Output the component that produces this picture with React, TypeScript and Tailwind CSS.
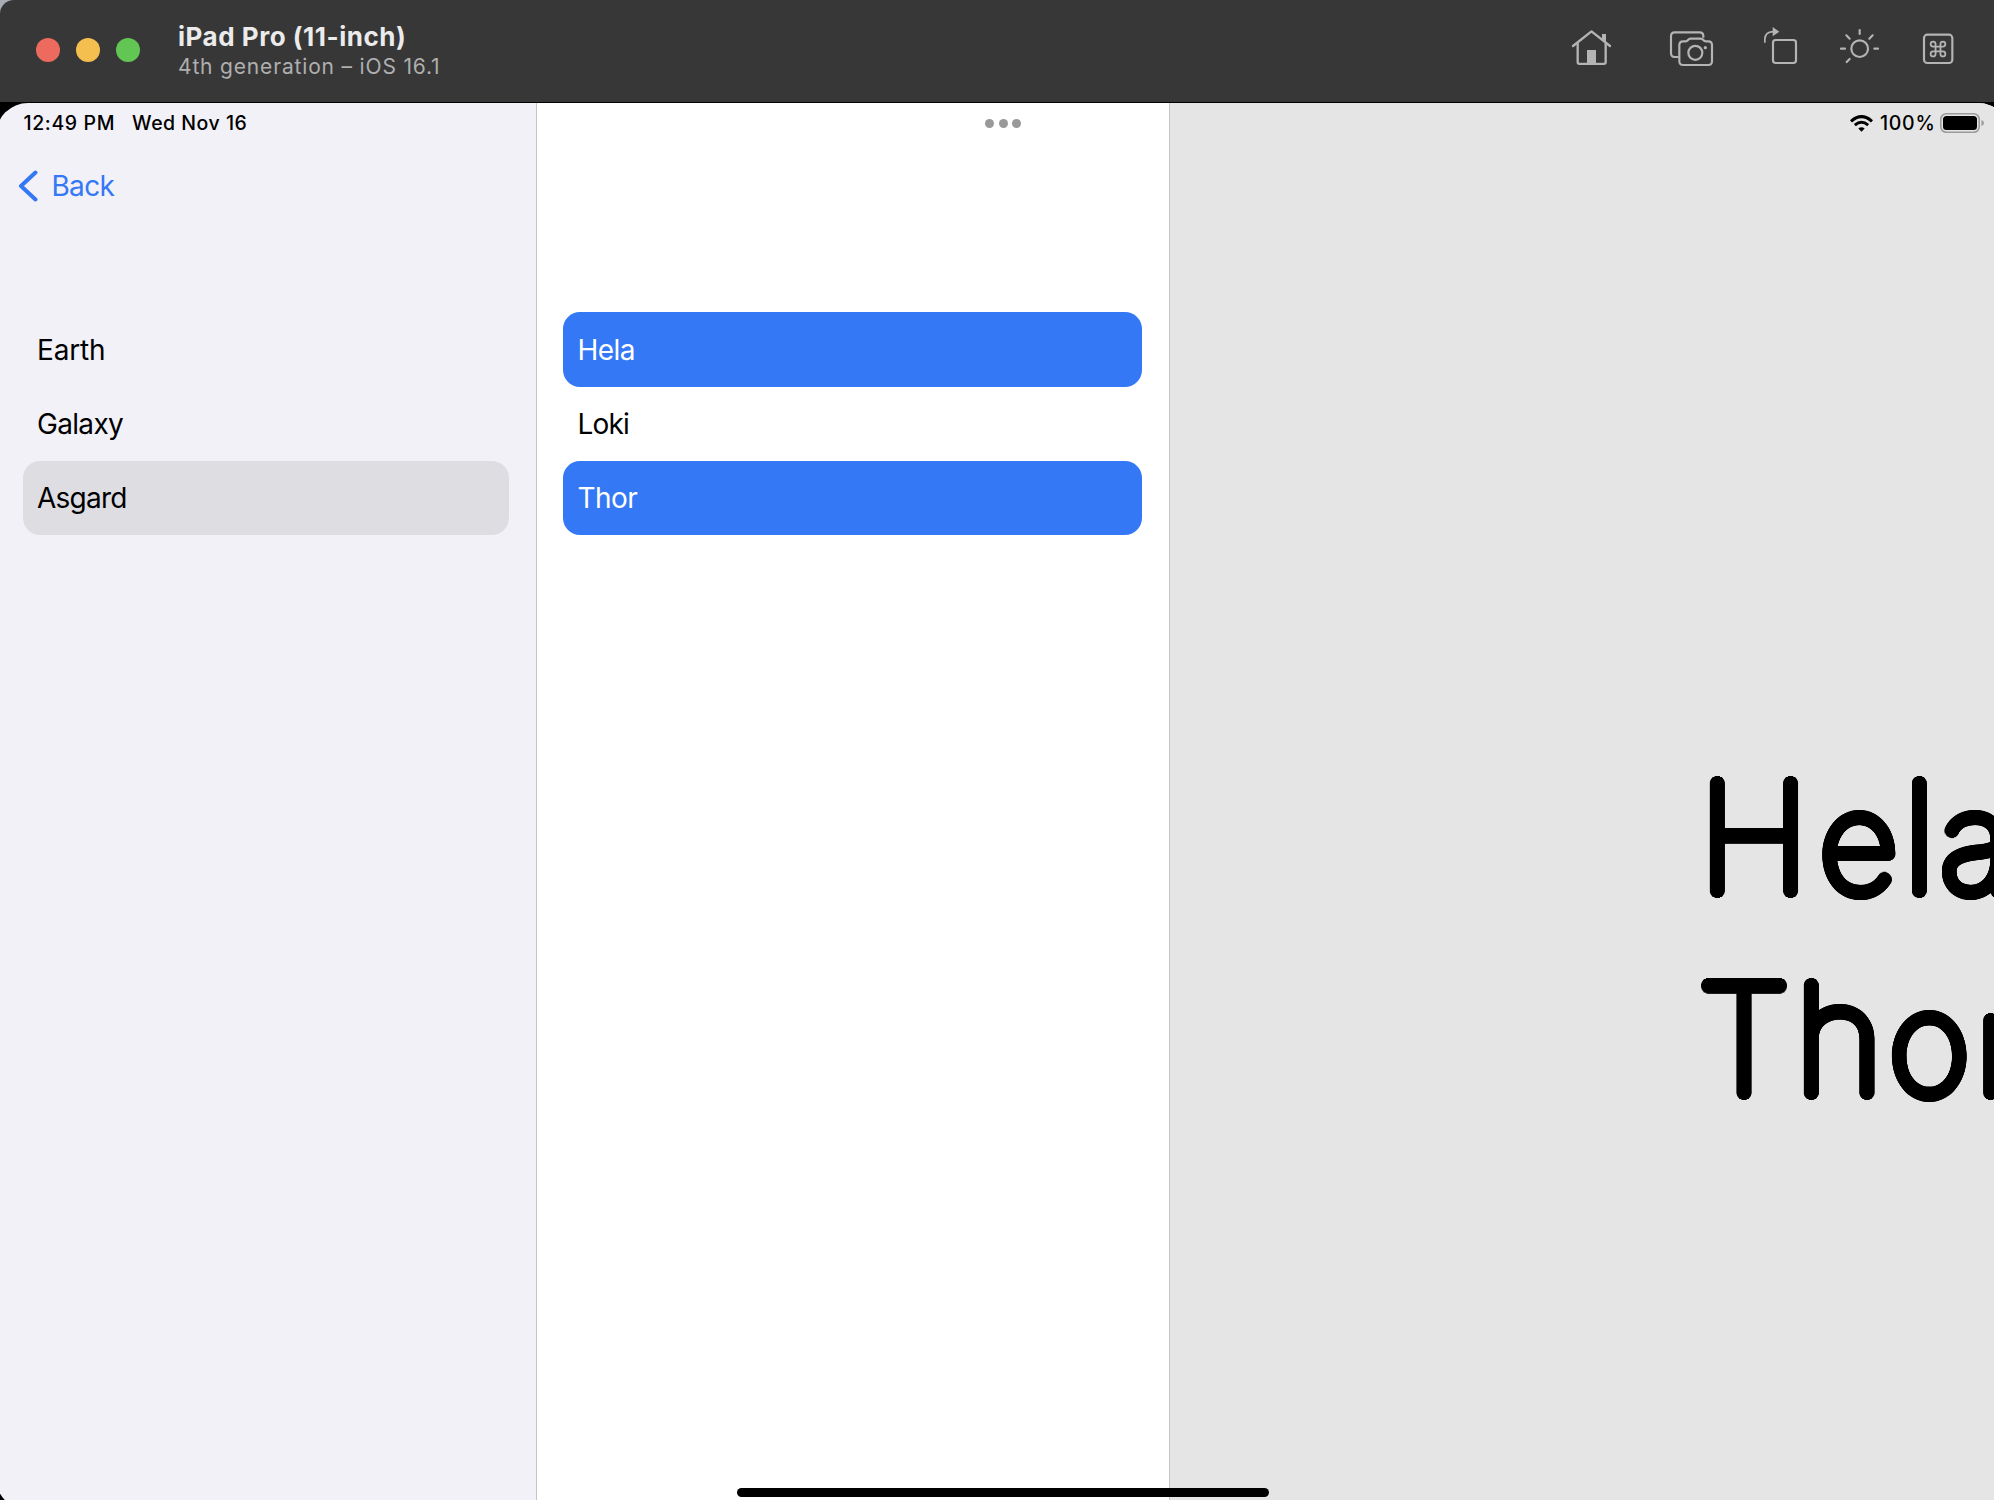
import React from "react";

const shadowRings = (radii: number[], steps: number) =>
  radii
    .flatMap((r) =>
      Array.from({ length: steps }, (_, i) => {
        const a = (i / steps) * Math.PI * 2;
        return `${(Math.cos(a) * r).toFixed(2)}px ${(Math.sin(a) * r).toFixed(2)}px 0 #000`;
      }),
    )
    .join(", ");

/* Thickens the thin face with round terminals. */
const roundedTerminals = { textShadow: shadowRings([2.5, 4.5, 5.7], 32) };

function HomeIcon() {
  return (
    <svg className="h-10 w-[41px] overflow-visible" viewBox="93 84 123 120" fill="none" stroke="currentColor" strokeWidth="7" strokeLinecap="round" strokeLinejoin="round">
      <path d="M99 138 L154.500 94 L210 138" />
      <path d="M113 131 V186 q0 5.500 5.500 5.500 H191.500 q5.500 0 5.500 -5.500 V131" />
      <path d="M141 150 h27 v42 h-27z M186 102 h12 v28 l-12 -10z" fill="currentColor" stroke="none" />
    </svg>
  );
}

function ScreenshotIcon() {
  return (
    <svg className="h-10 w-[45px] overflow-visible" viewBox="387 84 135 120" fill="none" stroke="currentColor" strokeWidth="6.500" strokeLinecap="round" strokeLinejoin="round">
      <path d="M416 171 H404 q-11 0 -11 -11 V108 q0 -11 11 -11 H479 q11 0 11 11 v5" strokeLinecap="butt" />
      <path d="M429 124 H437 Q441 124 444 120 Q447 116 452 116 H482 Q487 116 490 120 Q493 124 498 124 H505 Q516 124 516 135 V184 Q516 195 505 195 H429 Q418 195 418 184 V135 Q418 124 429 124Z" />
      <circle cx="466" cy="158.500" r="21" />
      <circle cx="496" cy="143" r="5" fill="currentColor" stroke="none" />
    </svg>
  );
}

function RotateIcon() {
  return (
    <svg className="h-10 w-[35px] overflow-visible" viewBox="669 84 105 120" fill="none" stroke="currentColor" strokeWidth="6.500">
      <rect x="699" y="120" width="69" height="69" rx="8" />
      <path d="M674.500 128 V118 Q675 96 699 95" strokeWidth="5" />
      <path d="M698 81 L718 95 L698 109Z" fill="currentColor" stroke="none" />
    </svg>
  );
}

function AppearanceIcon() {
  return (
    <svg className="h-10 w-[41px] overflow-visible" viewBox="897 84 123 120" fill="none" stroke="currentColor" strokeWidth="6.500" strokeLinecap="round">
      <circle cx="959" cy="146" r="25" />
      <path d="M959 90 V102 M903 146 H915 M1003 146 H1014 M919 106 L929 116 M998 106 L988 116 M920 186 L929 177" />
    </svg>
  );
}

function ShortcutIcon() {
  return (
    <svg className="h-10 w-8 overflow-visible" viewBox="1146 84 96 120" fill="none" stroke="currentColor" strokeWidth="6.500">
      <rect x="1152" y="104" width="85" height="85" rx="10" />
      <path transform="translate(1164.600 117.600) scale(2.450)" strokeWidth="2.200" d="M15 6v12a3 3 0 1 0 3-3H6a3 3 0 1 0 3 3V6a3 3 0 1 0-3 3h12a3 3 0 1 0-3-3" />
    </svg>
  );
}

function WifiIcon() {
  return (
    <svg className="h-[17px] w-[23px]" viewBox="0 0 69 51" fill="none" stroke="#000" strokeWidth="9">
      <path d="M3 19 Q34.500 -9 66 19" />
      <path d="M14.500 30.500 Q34.500 13 54.500 30.500" />
      <path d="M25 40.500 Q34.500 33 44 40.500 L34.500 50Z" fill="#000" stroke="none" />
    </svg>
  );
}

function BatteryIcon() {
  return (
    <svg className="h-5 w-[44px]" viewBox="0 0 44 20">
      <rect x="0.800" y="0.800" width="38.400" height="18.400" rx="5.500" fill="none" stroke="#9b9b9b" strokeWidth="1.600" />
      <rect x="3" y="3" width="34" height="14" rx="3.500" fill="#000" />
      <path d="M41.500 6.800 Q44 8 44 10 Q44 12 41.500 13.200Z" fill="#9b9b9b" />
    </svg>
  );
}

const worlds = [
  { name: "Earth", style: "tracking-[-0.200px]" },
  { name: "Galaxy", style: "tracking-[-0.680px]" },
  { name: "Asgard", style: "tracking-[-0.770px] bg-[#dedde2]" },
];

const people = [
  { name: "Hela", style: "tracking-[-0.540px] bg-[#3478f6] text-white" },
  { name: "Loki", style: "tracking-[-0.830px]" },
  { name: "Thor", style: "tracking-[-0.570px] bg-[#3478f6] text-white" },
];

function TitleBar() {
  return (
    <div className="shrink-0 bg-[#a9acb5]">
      <header className="flex h-[102px] items-center rounded-tl-[14px] bg-[#373737] pr-10 pb-0.5 pl-9">
        <div className="flex gap-4">
          <span className="size-6 rounded-full bg-[#ed6a5f]" />
          <span className="size-6 rounded-full bg-[#f5bf4f]" />
          <span className="size-6 rounded-full bg-[#62c655]" />
        </div>
        <div className="mt-[3px] ml-[38px] leading-[30px] whitespace-nowrap">
          <h1 className="text-[26px] font-bold tracking-[0.520px] text-[#ebebeb]">iPad Pro (11-inch)</h1>
          <p className="text-[21px] tracking-[0.830px] text-[#afafaf]">4th generation – iOS 16.1</p>
        </div>
        <nav className="mt-[-4px] ml-auto flex text-[#b4b4b4]">
          <HomeIcon />
          <span className="ml-[57px]"><ScreenshotIcon /></span>
          <span className="ml-[49px]"><RotateIcon /></span>
          <span className="ml-[41px]"><AppearanceIcon /></span>
          <span className="ml-[42px]"><ShortcutIcon /></span>
        </nav>
      </header>
    </div>
  );
}

export default function App() {
  return (
    <div className="flex h-[1500px] w-[1994px] flex-col overflow-hidden bg-black font-[Inter,sans-serif] text-black">
      <TitleBar />
      <main className="relative -mr-4 ml-[-4px] mt-px flex h-[1407px] shrink-0 overflow-hidden rounded-[32px] bg-[#f2f1f7]">
        <aside className="flex w-[540px] shrink-0 flex-col pl-1">
          <div className="mt-[10px] flex h-5 items-center gap-[17px] pl-[23.500px] text-[19.500px] leading-5 font-medium whitespace-nowrap">
            <span className="tracking-[0.620px]">12:49 PM</span>
            <span className="tracking-[0.500px]">Wed Nov 16</span>
          </div>
          <a className="mt-[33px] flex h-10 items-center pl-[18px] text-[28px] text-[#3478f6]">
            <svg className="h-8 w-5" viewBox="0 0 20 32" fill="none" stroke="currentColor" strokeWidth="4" strokeLinecap="round" strokeLinejoin="round">
              <path d="M17.500 2.500 L3 16 L17.500 29.500" />
            </svg>
            <span className="ml-[13.500px] tracking-[-0.700px]">Back</span>
          </a>
          <ul className="mt-[106.400px] ml-[23px] w-[485.500px] text-[28px]">
            {worlds.map((w) => (
              <li key={w.name} className={`flex h-[74.300px] items-center rounded-[17px] pl-[14px] ${w.style}`}>{w.name}</li>
            ))}
          </ul>
        </aside>
        <section className="w-[634px] shrink-0 border-x border-[#c6c6c8] bg-white">
          <div className="mt-4 ml-[448px] flex h-[9px] gap-[4.500px]">
            <span className="size-[9px] rounded-full bg-[#999]" />
            <span className="size-[9px] rounded-full bg-[#999]" />
            <span className="size-[9px] rounded-full bg-[#999]" />
          </div>
          <ul className="mt-[184.400px] ml-[26px] w-[579px] text-[28px]">
            {people.map((p) => (
              <li key={p.name} className={`flex h-[74.300px] items-center rounded-[17px] pl-[14.500px] ${p.style}`}>{p.name}</li>
            ))}
          </ul>
        </section>
        <section className="flex w-[840px] shrink-0 flex-col bg-[#e5e5e5]">
          <div className="mt-[10px] flex h-5 items-center justify-end pr-[26px] text-[19.500px] leading-5 font-medium">
            <WifiIcon />
            <span className="ml-[7px] tracking-[0.740px]">100%</span>
            <span className="ml-[4.500px]"><BatteryIcon /></span>
          </div>
          <div className="mt-[604px] ml-[527.500px] text-[151px] leading-[201.700px] font-thin whitespace-nowrap" style={roundedTerminals}>
            <p className="pl-px">
              <span className="tracking-[10px]">H</span>
              <span className="text-[137px] leading-none tracking-[5.300px]">e</span>
              <span className="tracking-[4.700px]">l</span>
              <span className="text-[137px] leading-none">a</span>
            </p>
            <p>
              <span className="tracking-[4.500px]">T</span>
              <span className="tracking-[5.500px]">h</span>
              <span className="text-[140px] leading-none tracking-[6px]">o</span>
              <span className="text-[137px] leading-none">r</span>
            </p>
          </div>
        </section>
        <div className="absolute top-[1385px] left-[741px] h-[9px] w-[532px] rounded-full bg-black" />
      </main>
    </div>
  );
}
